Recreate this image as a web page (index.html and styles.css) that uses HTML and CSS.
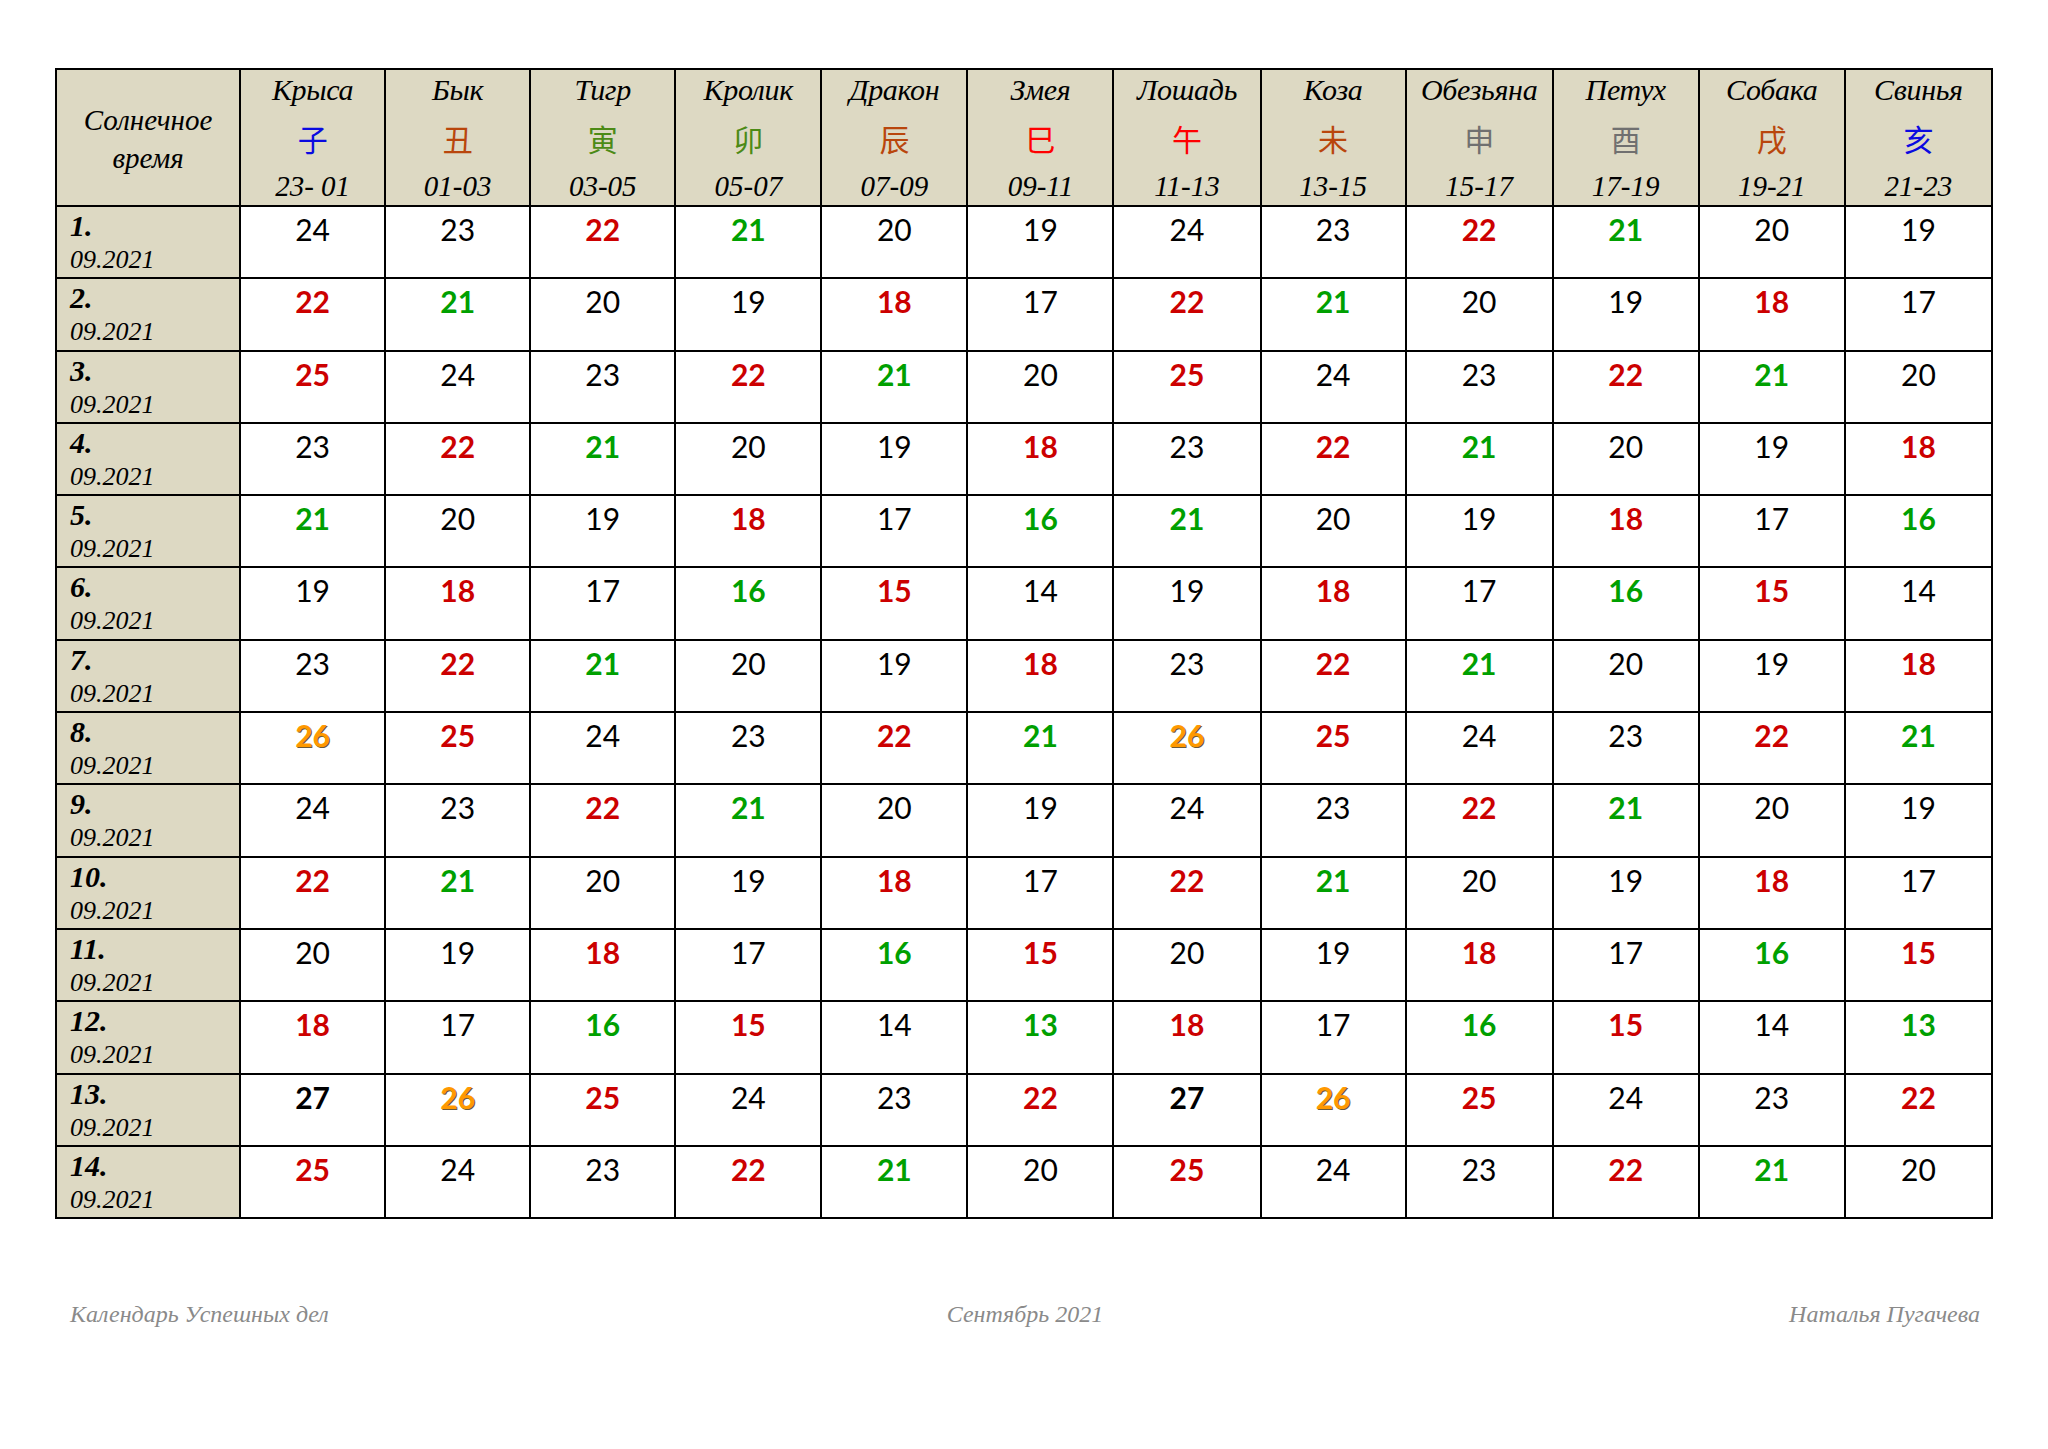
FILE: index.html
```html
<!DOCTYPE html>
<html lang="ru">
<head>
<meta charset="utf-8">
<title>Календарь Успешных дел — Сентябрь 2021</title>
<link rel="stylesheet" href="styles.css">
</head>
<body>
<div class="page">
<table class="cal">
<colgroup><col class="c0"><col class="w145"><col class="w145"><col class="w145"><col class="w146"><col class="w146"><col class="w146"><col class="w147"><col class="w145"><col class="w147"><col class="w146"><col class="w146"><col class="w147"></colgroup>
<thead>
<tr>
<th class="corner"><div class="solar">Солнечное<br>время</div></th>
<th><div class="nm">Крыса</div><div class="zh blue">子</div><div class="tm">23- 01</div></th>
<th><div class="nm">Бык</div><div class="zh brown">丑</div><div class="tm">01-03</div></th>
<th><div class="nm">Тигр</div><div class="zh green">寅</div><div class="tm">03-05</div></th>
<th><div class="nm">Кролик</div><div class="zh green">卯</div><div class="tm">05-07</div></th>
<th><div class="nm">Дракон</div><div class="zh brown">辰</div><div class="tm">07-09</div></th>
<th><div class="nm">Змея</div><div class="zh red">巳</div><div class="tm">09-11</div></th>
<th><div class="nm">Лошадь</div><div class="zh red">午</div><div class="tm">11-13</div></th>
<th><div class="nm">Коза</div><div class="zh brown">未</div><div class="tm">13-15</div></th>
<th><div class="nm">Обезьяна</div><div class="zh grey">申</div><div class="tm">15-17</div></th>
<th><div class="nm">Петух</div><div class="zh grey">酉</div><div class="tm">17-19</div></th>
<th><div class="nm">Собака</div><div class="zh brown">戌</div><div class="tm">19-21</div></th>
<th><div class="nm">Свинья</div><div class="zh blue">亥</div><div class="tm">21-23</div></th>
</tr>
</thead>
<tbody>
<tr><th class="day"><div class="dn">1.</div><div class="dm">09.2021</div></th><td>24</td><td>23</td><td class="r">22</td><td class="g">21</td><td>20</td><td>19</td><td>24</td><td>23</td><td class="r">22</td><td class="g">21</td><td>20</td><td>19</td></tr>
<tr><th class="day"><div class="dn">2.</div><div class="dm">09.2021</div></th><td class="r">22</td><td class="g">21</td><td>20</td><td>19</td><td class="r">18</td><td>17</td><td class="r">22</td><td class="g">21</td><td>20</td><td>19</td><td class="r">18</td><td>17</td></tr>
<tr><th class="day"><div class="dn">3.</div><div class="dm">09.2021</div></th><td class="r">25</td><td>24</td><td>23</td><td class="r">22</td><td class="g">21</td><td>20</td><td class="r">25</td><td>24</td><td>23</td><td class="r">22</td><td class="g">21</td><td>20</td></tr>
<tr><th class="day"><div class="dn">4.</div><div class="dm">09.2021</div></th><td>23</td><td class="r">22</td><td class="g">21</td><td>20</td><td>19</td><td class="r">18</td><td>23</td><td class="r">22</td><td class="g">21</td><td>20</td><td>19</td><td class="r">18</td></tr>
<tr><th class="day"><div class="dn">5.</div><div class="dm">09.2021</div></th><td class="g">21</td><td>20</td><td>19</td><td class="r">18</td><td>17</td><td class="g">16</td><td class="g">21</td><td>20</td><td>19</td><td class="r">18</td><td>17</td><td class="g">16</td></tr>
<tr><th class="day"><div class="dn">6.</div><div class="dm">09.2021</div></th><td>19</td><td class="r">18</td><td>17</td><td class="g">16</td><td class="r">15</td><td>14</td><td>19</td><td class="r">18</td><td>17</td><td class="g">16</td><td class="r">15</td><td>14</td></tr>
<tr><th class="day"><div class="dn">7.</div><div class="dm">09.2021</div></th><td>23</td><td class="r">22</td><td class="g">21</td><td>20</td><td>19</td><td class="r">18</td><td>23</td><td class="r">22</td><td class="g">21</td><td>20</td><td>19</td><td class="r">18</td></tr>
<tr><th class="day"><div class="dn">8.</div><div class="dm">09.2021</div></th><td class="o">26</td><td class="r">25</td><td>24</td><td>23</td><td class="r">22</td><td class="g">21</td><td class="o">26</td><td class="r">25</td><td>24</td><td>23</td><td class="r">22</td><td class="g">21</td></tr>
<tr><th class="day"><div class="dn">9.</div><div class="dm">09.2021</div></th><td>24</td><td>23</td><td class="r">22</td><td class="g">21</td><td>20</td><td>19</td><td>24</td><td>23</td><td class="r">22</td><td class="g">21</td><td>20</td><td>19</td></tr>
<tr><th class="day"><div class="dn">10.</div><div class="dm">09.2021</div></th><td class="r">22</td><td class="g">21</td><td>20</td><td>19</td><td class="r">18</td><td>17</td><td class="r">22</td><td class="g">21</td><td>20</td><td>19</td><td class="r">18</td><td>17</td></tr>
<tr><th class="day"><div class="dn">11.</div><div class="dm">09.2021</div></th><td>20</td><td>19</td><td class="r">18</td><td>17</td><td class="g">16</td><td class="r">15</td><td>20</td><td>19</td><td class="r">18</td><td>17</td><td class="g">16</td><td class="r">15</td></tr>
<tr><th class="day"><div class="dn">12.</div><div class="dm">09.2021</div></th><td class="r">18</td><td>17</td><td class="g">16</td><td class="r">15</td><td>14</td><td class="g">13</td><td class="r">18</td><td>17</td><td class="g">16</td><td class="r">15</td><td>14</td><td class="g">13</td></tr>
<tr><th class="day"><div class="dn">13.</div><div class="dm">09.2021</div></th><td class="k">27</td><td class="o">26</td><td class="r">25</td><td>24</td><td>23</td><td class="r">22</td><td class="k">27</td><td class="o">26</td><td class="r">25</td><td>24</td><td>23</td><td class="r">22</td></tr>
<tr><th class="day"><div class="dn">14.</div><div class="dm">09.2021</div></th><td class="r">25</td><td>24</td><td>23</td><td class="r">22</td><td class="g">21</td><td>20</td><td class="r">25</td><td>24</td><td>23</td><td class="r">22</td><td class="g">21</td><td>20</td></tr>
</tbody>
</table>
<div class="footer">
<span class="f-left">Календарь Успешных дел</span>
<span class="f-mid">Сентябрь 2021</span>
<span class="f-right">Наталья Пугачева</span>
</div>
</div>
</body>
</html>
```
FILE: styles.css
```css
html, body {
  margin: 0;
  padding: 0;
  background: #ffffff;
}
.page {
  padding: 68px 0 0 55px;
  font-family: "Liberation Serif", "Noto Sans CJK SC", serif;
  color: #000;
}
.cal {
  border-collapse: collapse;
  table-layout: fixed;
  width: 1938px;
}
.c0 { width: 184px; }
.w145 { width: 145px; }
.w146 { width: 146px; }
.w147 { width: 147px; }
.w148 { width: 148px; }
.cal th, .cal td {
  border: 2px solid #000;
  padding: 0;
  vertical-align: top;
}
.cal thead th {
  background: #DDD9C3;
  height: 135px;
  text-align: center;
  font-weight: normal;
}
.cal thead th.corner {
  vertical-align: middle;
}
.solar {
  font-style: italic;
  font-size: 29px;
  line-height: 38px;
  padding-top: 2px;
}
.nm {
  font-style: italic;
  font-size: 30px;
  line-height: 36px;
  padding-top: 2px;
  white-space: nowrap;
  letter-spacing: -0.3px;
}
.zh {
  font-family: "Noto Sans CJK SC", sans-serif;
  font-size: 30px;
  line-height: 40px;
  margin-top: 10px;
}
.tm {
  font-style: italic;
  font-size: 29px;
  line-height: 36px;
  margin-top: 10px;
  white-space: pre;
}
.blue { color: #0a0ae0; }
.brown { color: #b9460c; }
.green { color: #4c8a16; }
.red { color: #ff0000; }
.grey { color: #707070; }

.cal tbody tr { height: 72.3px; }
.cal th.day {
  background: #DDD9C3;
  text-align: left;
  padding: 1px 0 0 13px;
  font-weight: normal;
}
.dn {
  font-style: italic;
  font-weight: bold;
  font-size: 30px;
  line-height: 35px;
}
.dm {
  font-style: italic;
  font-size: 26px;
  line-height: 34px;
}
.cal td {
  font-family: Lato, "Open Sans", sans-serif;
  font-size: 30px;
  line-height: 36px;
  text-align: center;
  padding-top: 4px;
  color: #000;
}
.cal td.r { color: #cc0000; font-weight: bold; }
.cal td.g { color: #00a000; font-weight: bold; }
.cal td.o { color: #ff9900; font-weight: bold; text-shadow: 1px 1px 0 #6b5a3a; }
.cal td.k { color: #000; font-weight: bold; }

.footer {
  display: grid;
  grid-template-columns: 1fr auto 1fr;
  width: 1910px;
  margin: 80px 0 0 15px;
  font-style: italic;
  font-size: 24px;
  line-height: 30px;
  color: #8a8a8a;
}
.f-left { justify-self: start; }
.f-mid { justify-self: center; }
.f-right { justify-self: end; }
```
